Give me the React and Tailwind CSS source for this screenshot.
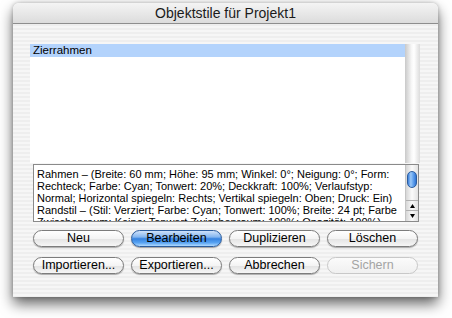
import React from 'react'

const lines = [
  'Rahmen – (Breite: 60 mm; Höhe: 95 mm; Winkel: 0°; Neigung: 0°; Form:',
  'Rechteck; Farbe: Cyan; Tonwert: 20%; Deckkraft: 100%; Verlaufstyp:',
  'Normal; Horizontal spiegeln: Rechts; Vertikal spiegeln: Oben; Druck: Ein)',
  'Randstil – (Stil: Verziert; Farbe: Cyan; Tonwert: 100%; Breite: 24 pt; Farbe',
  'Zwischenraum: Keine; Tonwert Zwischenraum: 100%; Opazität: 100%)',
]

function AquaButton({ label, primary, disabled }){
  if (primary) return (
    <div className="h-[17px] rounded-full border border-[#2c5d9e] bg-[linear-gradient(180deg,#cfe2fa_0%,#84b6f0_40%,#3582e0_52%,#58a3f2_78%,#b0daff_100%)] shadow-[0_1px_1px_rgba(0,0,0,0.35)] flex items-center justify-center text-[12.5px] text-black">
      {label}
    </div>
  )
  return (
    <div className={`h-[17px] rounded-full border flex items-center justify-center text-[12.5px] ${disabled ? 'border-[#c8c8c8] text-[#a4a4a4] bg-[linear-gradient(180deg,#fbfbfb,#f0f0f0)]' : 'border-[#7c7c7c] text-black bg-[linear-gradient(180deg,#ffffff_0%,#f4f4f4_50%,#e4e4e4_55%,#f6f6f6_100%)] shadow-[0_1px_1px_rgba(0,0,0,0.3)]'}`}>
      {label}
    </div>
  )
}

export default function App(){
  return (
    <div className="w-[452px] h-[318px] bg-white pt-[3px] pl-[13px] font-['Liberation_Sans',sans-serif] overflow-hidden">
      <div className="w-[425px] h-[294px] rounded-t-[6px] overflow-hidden flex flex-col shadow-[0_7px_14px_rgba(0,0,0,0.6),0_0_4px_rgba(0,0,0,0.25)]">
        <div className="h-[21px] shrink-0 border-b border-[#8e8e8e] bg-[linear-gradient(180deg,#f4f4f4,#dcdcdc)] flex items-center justify-center text-[14px] text-[#1a1a1a]">
          Objektstile für Projekt1
        </div>
        <div className="flex-1 bg-[repeating-linear-gradient(180deg,#eeeeee_0px,#eeeeee_2px,#f6f6f6_2px,#f6f6f6_4px)] flex flex-col">
          <div className="ml-[17px] mt-[20px] flex h-[119px]">
            <div className="w-[375px] bg-white">
              <div className="h-[13px] bg-[#b3d3fc] pl-[3px] text-[11.5px] leading-[13px] text-black">Zierrahmen</div>
            </div>
            <div className="w-[15px] bg-[linear-gradient(90deg,#c9c9c9_0%,#f8f8f8_45%,#ffffff_60%,#dcdcdc_100%)]" />
          </div>
          <div className="ml-[20px] mt-[1px] w-[386px] h-[58px] border border-[#8a8a8a] bg-white flex">
            <div className="flex-1 overflow-hidden pl-[3px] pt-[3px] text-[11px] leading-[12px] text-black">
              {lines.map((l, i) => <div key={i} className="whitespace-nowrap">{l}</div>)}
            </div>
            <div className="w-[13px] flex flex-col border-l border-[#c4c4c4] bg-[linear-gradient(90deg,#d6d6d6,#fafafa_50%,#e2e2e2)]">
              <div className="mt-[6px] mx-[1px] h-[17px] rounded-full border border-[#2c5d9e] bg-[linear-gradient(90deg,#3c80dc_0%,#9cc8f6_35%,#6aa8f0_60%,#2f74d4_100%)]" />
              <div className="flex-1" />
              <div className="h-[10px] border-t border-[#b0b0b0] flex items-center justify-center">
                <svg width="5" height="4" viewBox="0 0 5 4"><path d="M2.5 0 L5 4 L0 4 Z" fill="#000" /></svg>
              </div>
              <div className="h-[11px] border-t border-[#b0b0b0] flex items-center justify-center">
                <svg width="5" height="4" viewBox="0 0 5 4"><path d="M0 0 L5 0 L2.5 4 Z" fill="#000" /></svg>
              </div>
            </div>
          </div>
          <div className="ml-[20px] mt-[8px] w-[385px] grid grid-cols-4 gap-x-[7px] gap-y-[10px]">
            <AquaButton label="Neu" />
            <AquaButton label="Bearbeiten" primary />
            <AquaButton label="Duplizieren" />
            <AquaButton label="Löschen" />
            <AquaButton label="Importieren..." />
            <AquaButton label="Exportieren..." />
            <AquaButton label="Abbrechen" />
            <AquaButton label="Sichern" disabled />
          </div>
        </div>
      </div>
    </div>
  )
}
